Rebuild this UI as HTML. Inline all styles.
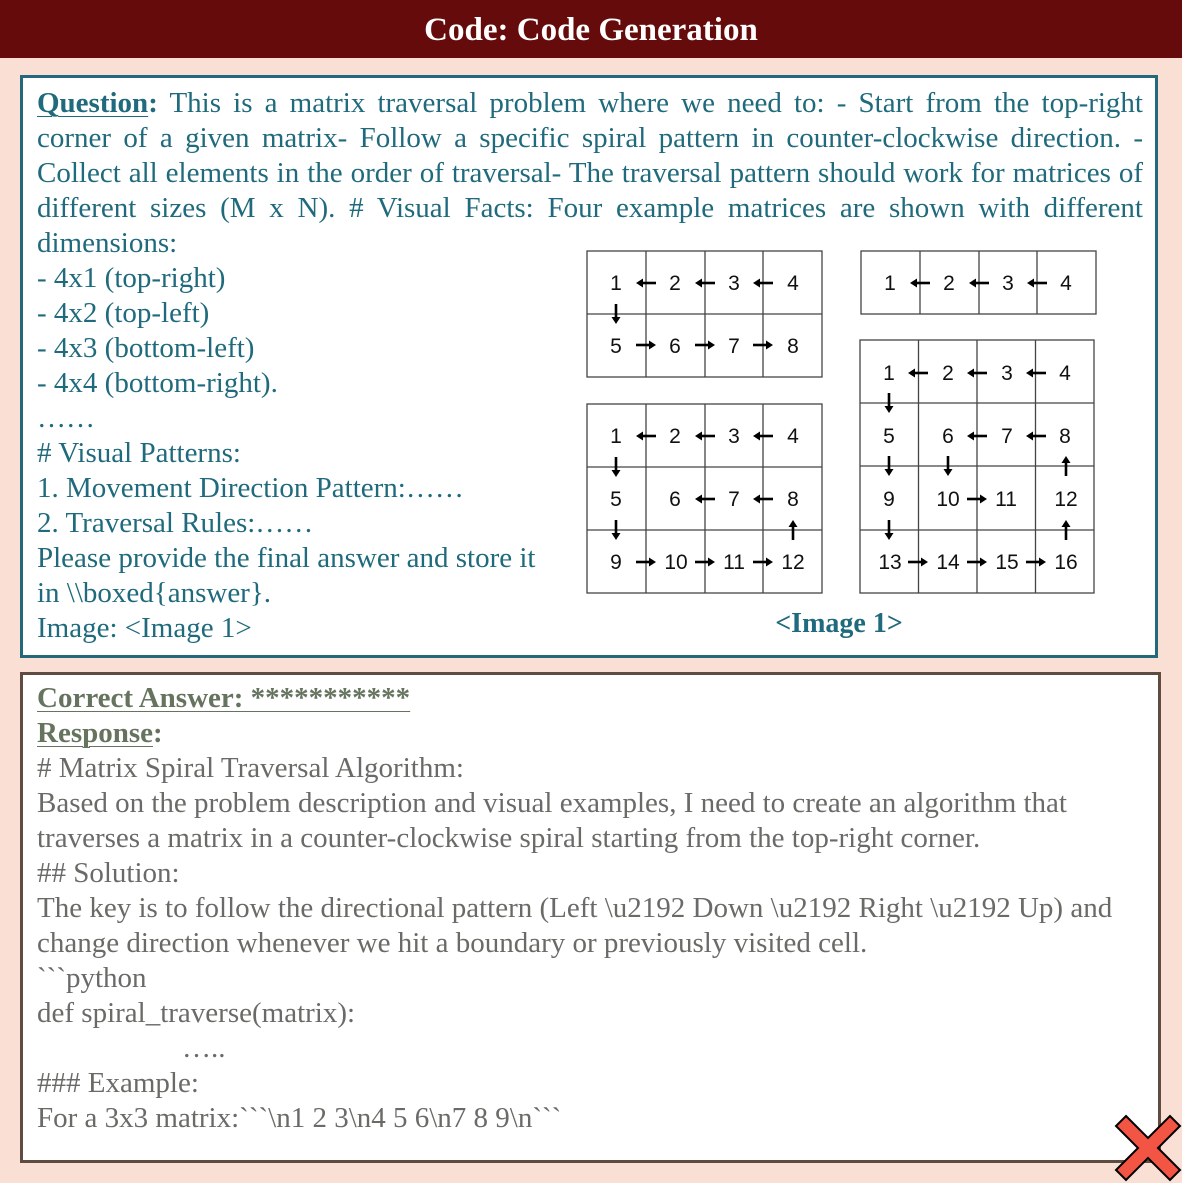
<!DOCTYPE html>
<html><head><meta charset="utf-8"><style>
*{margin:0;padding:0;box-sizing:border-box}
body{width:1182px;height:1183px;background:#fadfd5;position:relative;overflow:hidden;font-family:"Liberation Serif",serif}
.hdr{position:absolute;left:0;top:0;width:1182px;height:58px;background:#660b0b;color:#fff;font-weight:bold;font-size:33px;text-align:center;line-height:60px}
.q{position:absolute;left:20px;top:75px;width:1138px;height:583px;border:3px solid #24687e;background:#fff}
.qt{position:absolute;left:14px;top:8px;width:1106px;color:#1f6a7c;font-size:29px;line-height:35px;text-align:justify;text-align-last:justify;white-space:normal}
.ql{position:absolute;left:14px;top:148px;color:#1f6a7c;font-size:29px;line-height:35px;white-space:pre}
.r{position:absolute;left:20px;top:672px;width:1141px;height:491px;border:3px solid #5f4b3f;background:#fff}
.rt{position:absolute;left:14px;top:6px;color:#6a6a66;font-size:29px;line-height:35px;white-space:pre}
.g{color:#66735f;font-weight:bold}
u{text-decoration-thickness:1px;text-underline-offset:4px}
svg{position:absolute;left:0;top:0}
</style></head><body>
<div class="hdr">Code: Code Generation</div>
<div class="q">
<div class="qt"><b><u>Question</u>:</b> This is a matrix traversal problem where we need to: - Start from the top-right<br>corner of a given matrix- Follow a specific spiral pattern in counter-clockwise direction. -<br>Collect all elements in the order of traversal- The traversal pattern should work for matrices of<br>different sizes (M x N). # Visual Facts: Four example matrices are shown with different</div>
<div class="ql">dimensions:
- 4x1 (top-right)
- 4x2 (top-left)
- 4x3 (bottom-left)
- 4x4 (bottom-right).
……
# Visual Patterns:
1. Movement Direction Pattern:……
2. Traversal Rules:……
Please provide the final answer and store it
in \\boxed{answer}.
Image: &lt;Image 1&gt;</div>
</div>
<div class="r"><div class="rt"><span class="g"><u>Correct Answer: ***********</u></span>
<span class="g"><u>Response</u>:</span>
# Matrix Spiral Traversal Algorithm:
Based on the problem description and visual examples, I need to create an algorithm that
traverses a matrix in a counter-clockwise spiral starting from the top-right corner.
## Solution:
The key is to follow the directional pattern (Left \u2192 Down \u2192 Right \u2192 Up) and
change direction whenever we hit a boundary or previously visited cell.
&#96;&#96;&#96;python
def spiral_traverse(matrix):
                    …..
### Example:
For a 3x3 matrix:&#96;&#96;&#96;\n1 2 3\n4 5 6\n7 8 9\n&#96;&#96;&#96;</div></div>
<svg width="1182" height="1183" viewBox="0 0 1182 1183">
<defs><g id="A"><path d="M-4,0H10" stroke="#000" stroke-width="2.6"/><path d="M-10,0L-3,-4.5L-3,4.5Z" fill="#000"/></g></defs>
<g fill="none" stroke="#444" stroke-width="1.3">
<rect x="587" y="251" width="235" height="126"/><path d="M646,251V377M705,251V377M763,251V377M587,314H822"/>
<rect x="587" y="404" width="235" height="189"/><path d="M646,404V593M705,404V593M763,404V593M587,467H822M587,530H822"/>
<rect x="861" y="251" width="235" height="63"/><path d="M920,251V314M979,251V314M1037,251V314"/>
<rect x="860" y="340" width="234" height="253"/><path d="M918.5,340V593M977,340V593M1035.5,340V593M860,403H1094M860,466H1094M860,530H1094"/>
</g>
<g>
<use href="#A" transform="translate(646,283)"/><use href="#A" transform="translate(705,283)"/><use href="#A" transform="translate(763,283)"/>
<use href="#A" transform="translate(616,314) rotate(-90)"/>
<use href="#A" transform="translate(646,345) rotate(180)"/><use href="#A" transform="translate(705,345) rotate(180)"/><use href="#A" transform="translate(763,345) rotate(180)"/>

<use href="#A" transform="translate(646,436)"/><use href="#A" transform="translate(705,436)"/><use href="#A" transform="translate(763,436)"/>
<use href="#A" transform="translate(616,467) rotate(-90)"/><use href="#A" transform="translate(616,530) rotate(-90)"/>
<use href="#A" transform="translate(705,499)"/><use href="#A" transform="translate(763,499)"/>
<use href="#A" transform="translate(793,530) rotate(90)"/>
<use href="#A" transform="translate(646,562) rotate(180)"/><use href="#A" transform="translate(705,562) rotate(180)"/><use href="#A" transform="translate(763,562) rotate(180)"/>

<use href="#A" transform="translate(920,283)"/><use href="#A" transform="translate(979,283)"/><use href="#A" transform="translate(1037,283)"/>

<use href="#A" transform="translate(918,373)"/><use href="#A" transform="translate(977,373)"/><use href="#A" transform="translate(1036,373)"/>
<use href="#A" transform="translate(889,403) rotate(-90)"/><use href="#A" transform="translate(889,466) rotate(-90)"/><use href="#A" transform="translate(889,530) rotate(-90)"/><use href="#A" transform="translate(948,466) rotate(-90)"/>
<use href="#A" transform="translate(977,436)"/><use href="#A" transform="translate(1036,436)"/>
<use href="#A" transform="translate(1066,466) rotate(90)"/><use href="#A" transform="translate(1066,530) rotate(90)"/>
<use href="#A" transform="translate(977,499) rotate(180)"/>
<use href="#A" transform="translate(918,562) rotate(180)"/><use href="#A" transform="translate(977,562) rotate(180)"/><use href="#A" transform="translate(1036,562) rotate(180)"/>
</g>
<g font-family="Liberation Sans,sans-serif" font-size="21" fill="#111" text-anchor="middle">
<text x="616" y="290">1</text><text x="675" y="290">2</text><text x="734" y="290">3</text><text x="793" y="290">4</text>
<text x="616" y="353">5</text><text x="675" y="353">6</text><text x="734" y="353">7</text><text x="793" y="353">8</text>
<text x="616" y="443">1</text><text x="675" y="443">2</text><text x="734" y="443">3</text><text x="793" y="443">4</text>
<text x="616" y="506">5</text><text x="675" y="506">6</text><text x="734" y="506">7</text><text x="793" y="506">8</text>
<text x="616" y="569">9</text><text x="676" y="569">10</text><text x="734" y="569">11</text><text x="793" y="569">12</text>
<text x="890" y="290">1</text><text x="949" y="290">2</text><text x="1008" y="290">3</text><text x="1066" y="290">4</text>
<text x="889" y="380">1</text><text x="948" y="380">2</text><text x="1007" y="380">3</text><text x="1065" y="380">4</text>
<text x="889" y="443">5</text><text x="948" y="443">6</text><text x="1007" y="443">7</text><text x="1065" y="443">8</text>
<text x="889" y="506">9</text><text x="948" y="506">10</text><text x="1006" y="506">11</text><text x="1066" y="506">12</text>
<text x="890" y="569">13</text><text x="948" y="569">14</text><text x="1007" y="569">15</text><text x="1066" y="569">16</text>
</g>
<text x="839" y="632" font-family="Liberation Serif,serif" font-weight="bold" font-size="28" fill="#1f6a7c" text-anchor="middle">&lt;Image 1&gt;</text>
<g stroke="#000" stroke-width="2"><path d="M1126,1116L1148,1138L1170,1116L1180,1126L1158,1148L1180,1170L1170,1180L1148,1158L1126,1180L1116,1170L1138,1148L1116,1126Z" fill="#f25543"/></g>
</svg>
</body></html>
